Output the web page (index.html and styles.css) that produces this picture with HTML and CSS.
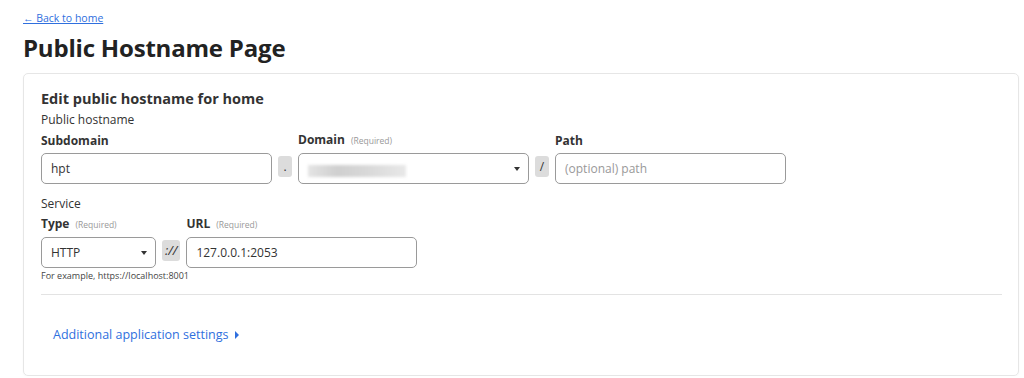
FILE: index.html
```html
<!DOCTYPE html>
<html lang="en">
<head>
  <meta charset="UTF-8">
  <title>Public Hostname Page</title>
  <link rel="stylesheet" href="styles.css">
</head>
<body>

  <a href="#" class="back-link">&larr; Back to home</a>
  <h1 class="page-title">Public Hostname Page</h1>

  <div class="card">
    <h2 class="card-title">Edit public hostname for home</h2>
    <div class="section-label">Public hostname</div>

    <div class="row">
      <div class="field field-wide">
        <label class="field-label">Subdomain</label>
        <input class="text-input" type="text" value="hpt">
      </div>
      <span class="addon">.</span>
      <div class="field field-wide">
        <label class="field-label">Domain <span class="req">(Required)</span></label>
        <div class="select-box">
          <span class="blurred"></span>
          <span class="caret"></span>
        </div>
      </div>
      <span class="addon">/</span>
      <div class="field field-wide">
        <label class="field-label">Path</label>
        <input class="text-input" type="text" placeholder="(optional) path">
      </div>
    </div>

    <div class="section-label service-label">Service</div>

    <div class="row">
      <div class="field field-type">
        <label class="field-label">Type <span class="req">(Required)</span></label>
        <div class="select-box">
          <span class="select-value">HTTP</span>
          <span class="caret"></span>
        </div>
      </div>
      <span class="addon addon-proto">://</span>
      <div class="field field-url">
        <label class="field-label">URL <span class="req">(Required)</span></label>
        <input class="text-input" type="text" value="127.0.0.1:2053">
      </div>
    </div>
    <div class="hint">For example, https://localhost:8001</div>

    <hr class="divider">

    <a href="#" class="more-link">Additional application settings <span class="tri"></span></a>
  </div>

</body>
</html>
```

FILE: styles.css
```css
body {
  font-family: 'Open Sans', 'Noto Sans', sans-serif;
  margin: 0;
  padding: 10px 5px 0 23px;
  background-color: #ffffff;
  color: #333;
}

.back-link {
  display: block;
  font-size: 10.5px;
  color: #2f6fde;
  line-height: 16px;
}

.page-title {
  font-size: 24px;
  font-weight: 700;
  margin: 7px 0 10px;
  line-height: 30px;
  color: #222;
  letter-spacing: -0.2px;
}

.card {
  border: 1px solid #e6e6e6;
  border-radius: 5px;
  padding: 15px 16px 31px 17px;
  box-shadow: 0 1px 2px rgba(0,0,0,0.04);
}

.card-title {
  font-size: 14.5px;
  font-weight: 700;
  margin: 0;
  line-height: 20px;
  color: #333;
}

.section-label {
  font-size: 12px;
  line-height: 16px;
  margin-top: 3px;
  color: #333;
}

.service-label {
  margin-top: 12px;
}

.row {
  display: flex;
  align-items: flex-end;
  gap: 6px;
  margin-top: 4px;
}

.field {
  display: flex;
  flex-direction: column;
}

.field-wide { width: 231px; }
.field-type { width: 115px; }
.field-url { width: 231px; }

.field-label {
  font-size: 12px;
  font-weight: 700;
  line-height: 16px;
  margin-bottom: 4px;
  color: #333;
}

.req {
  font-size: 8.5px;
  font-weight: 400;
  color: #999;
  margin-left: 3px;
}

.text-input,
.select-box {
  box-sizing: border-box;
  height: 31px;
  width: 100%;
  border: 1px solid #9a9a9a;
  border-radius: 5px;
  padding: 0 9px;
  font-family: inherit;
  font-size: 12px;
  color: #333;
  background: white;
  outline: none;
}

.text-input::placeholder {
  color: #999;
}

.select-box {
  display: flex;
  align-items: center;
  justify-content: space-between;
  padding-right: 8px;
}

.caret {
  width: 0;
  height: 0;
  border-left: 3px solid transparent;
  border-right: 3px solid transparent;
  border-top: 4px solid #333;
}

.blurred {
  width: 98px;
  height: 12px;
  background: linear-gradient(90deg, #e4e4e4, #cfcfcf 30%, #d8d8d8 60%, #e8e8e8);
  filter: blur(1.5px);
  margin-top: 4px;
}

.addon {
  align-self: flex-end;
  margin-bottom: 7px;
  box-sizing: border-box;
  min-width: 14px;
  height: 21px;
  padding: 0 3px;
  background: #dcdcdc;
  border-radius: 3px;
  font-size: 12px;
  line-height: 21px;
  text-align: center;
  color: #333;
}

.addon-proto {
  font-style: italic;
  font-size: 13px;
  padding: 0 3px;
}

.hint {
  font-size: 9px;
  color: #444;
  margin-top: 2px;
  line-height: 12px;
}

.divider {
  border: none;
  border-top: 1px solid #e3e3e3;
  margin: 12px 0 0;
  width: 961px;
}

.more-link {
  display: inline-block;
  margin: 31px 0 0 12px;
  font-size: 12.5px;
  color: #2f6fde;
  text-decoration: none;
  line-height: 18px;
}

.tri {
  display: inline-block;
  width: 0;
  height: 0;
  border-top: 4px solid transparent;
  border-bottom: 4px solid transparent;
  border-left: 4px solid #2f6fde;
  margin-left: 3px;
}
```
